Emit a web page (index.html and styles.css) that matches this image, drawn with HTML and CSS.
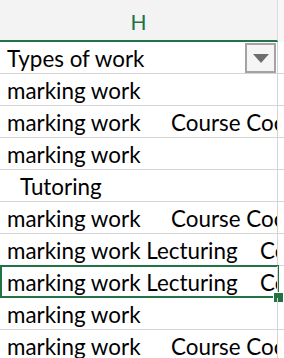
FILE: index.html
```html
<!DOCTYPE html>
<html lang="en">
<head>
  <meta charset="UTF-8">
  <meta name="viewport" content="width=device-width, initial-scale=1.0">
  <title>Sheet - column H</title>
  <link rel="stylesheet" href="styles.css">
</head>
<body>
  <div class="sheet">
    <div class="colhead">
      <div class="hcell">H</div>
      <div class="hrest"></div>
    </div>

    <div class="row">
      <div class="cell">
        <span>Types of work</span>
        <span class="filter"><span class="arrow"></span></span>
      </div>
      <div class="rest"></div>
    </div>
    <div class="row">
      <div class="cell"><span>marking work</span></div>
      <div class="rest"></div>
    </div>
    <div class="row">
      <div class="cell"><span class="w-short">marking work</span><span>Course Coordination</span></div>
      <div class="rest"></div>
    </div>
    <div class="row">
      <div class="cell"><span>marking work</span></div>
      <div class="rest"></div>
    </div>
    <div class="row">
      <div class="cell"><span class="indent">Tutoring</span></div>
      <div class="rest"></div>
    </div>
    <div class="row">
      <div class="cell"><span class="w-short">marking work</span><span>Course Coordination</span></div>
      <div class="rest"></div>
    </div>
    <div class="row">
      <div class="cell"><span class="w-long">marking work Lecturing</span><span>Course Coordination</span></div>
      <div class="rest"></div>
    </div>
    <div class="row selected">
      <div class="cell"><span class="w-long">marking work Lecturing</span><span>Course Coordination</span></div>
      <div class="rest"></div>
    </div>
    <div class="row">
      <div class="cell"><span>marking work</span></div>
      <div class="rest"></div>
    </div>
    <div class="row">
      <div class="cell"><span class="w-short">marking work</span><span>Course Coordination</span></div>
      <div class="rest"></div>
    </div>
  </div>
</body>
</html>
```

FILE: styles.css
```css
:root {
  --green: #217346;
  --grid: #d4d4d4;
  --head-bg: #f3f3f3;
  --text: #000;
}

body {
  margin: 0;
  background: #fff;
  font-family: Lato, "Open Sans", sans-serif;
  color: var(--text);
  overflow: hidden;
}

.sheet {
  width: 284px;
}

.colhead {
  display: flex;
  height: 42px;
}

.hcell {
  width: 278px;
  background: var(--head-bg);
  border-bottom: 2px solid var(--green);
  border-right: 1px solid #dcdcdc;
  box-sizing: border-box;
  display: flex;
  align-items: center;
  justify-content: center;
  color: var(--green);
  font-size: 21px;
  padding-top: 2px;
}

.hrest {
  flex: 1;
  background: #f7f7f7;
}

.row {
  position: relative;
  display: flex;
  height: 32px;
  box-sizing: border-box;
  border-bottom: 1px solid var(--grid);
}

.cell {
  position: relative;
  width: 278px;
  box-sizing: border-box;
  border-right: 1px solid var(--grid);
  padding-left: 7px;
  display: flex;
  align-items: flex-end;
  white-space: pre;
  overflow: hidden;
  font-size: 22.4px;
  line-height: 28px;
}

.rest {
  flex: 1;
}

.w-short {
  width: 164px;
  flex: none;
}

.w-long {
  width: 253px;
  flex: none;
}

.indent {
  padding-left: 13px;
}

.filter {
  position: absolute;
  right: 1px;
  top: 1px;
  width: 31px;
  height: 30px;
  box-sizing: border-box;
  border: 2px solid #a3a3a3;
  background: #f5f5f5;
  display: flex;
  align-items: center;
  justify-content: center;
}

.arrow {
  width: 0;
  height: 0;
  border-left: 8px solid transparent;
  border-right: 8px solid transparent;
  border-top: 9px solid #6e6e6e;
}

/* active cell frame and fill handle */
.row.selected::before {
  content: "";
  position: absolute;
  left: 0;
  top: -1px;
  width: 279px;
  bottom: -1px;
  box-sizing: border-box;
  border: 2px solid var(--green);
}

.row.selected::after {
  content: "";
  position: absolute;
  left: 273px;
  bottom: -6px;
  width: 9px;
  height: 9px;
  background: var(--green);
  border: 1px solid #fff;
}
```
